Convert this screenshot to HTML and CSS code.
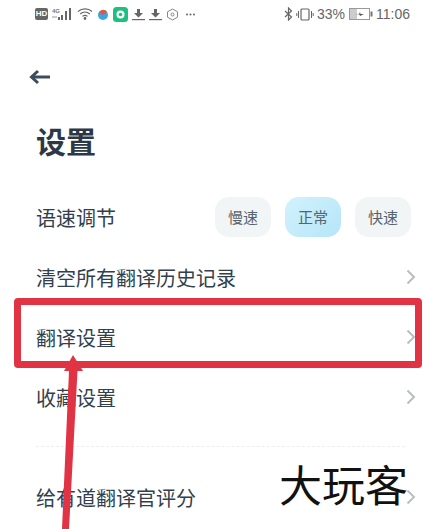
FILE: index.html
```html
<!DOCTYPE html>
<html lang="zh-CN">

<head>
    <meta charset="UTF-8">
    <meta name="viewport" content="width=device-width, initial-scale=1.0">
    <title>设置</title>
    <link rel="stylesheet" href="styles.css">
</head>

<body>

    <div class="page">
        <div class="status-bar">
            <div class="status-left">
                <span class="hd-badge">HD</span>
                <svg class="icon-signal" width="21" height="14" viewBox="0 0 21 14">
                    <text x="0" y="6" font-family="Liberation Sans" font-size="6" font-weight="bold" fill="#777">4G</text>
                    <rect x="0" y="9" width="5" height="2" fill="#ccc" />
                    <rect x="6" y="10" width="2" height="3" fill="#666" />
                    <rect x="9" y="8" width="2" height="5" fill="#666" />
                    <rect x="13" y="4" width="2" height="9" fill="#666" />
                    <rect x="17" y="1" width="2" height="12" fill="#666" />
                </svg>
                <svg width="16" height="14" viewBox="0 0 16 14" fill="none" stroke="#666" stroke-width="1.2">
                    <path d="M1 4.5 C5 1 11 1 15 4.5" />
                    <path d="M3.2 7 C6 4.6 10 4.6 12.8 7" />
                    <path d="M5.5 9.4 C7 8.2 9 8.2 10.5 9.4" />
                    <circle cx="8" cy="11.5" r="0.8" fill="#666" />
                </svg>
                <svg width="12" height="13" viewBox="0 0 12 13">
                    <circle cx="6" cy="7" r="5" fill="#3aa6dd" />
                    <path d="M2 5 C4 1 8 1 10 4 L6 7 Z" fill="#e2574c" />
                </svg>
                <svg width="15" height="15" viewBox="0 0 15 15">
                    <rect width="15" height="15" rx="3.5" fill="#1fbf82" />
                    <circle cx="7.5" cy="7.5" r="4" fill="#fff" />
                    <circle cx="7.5" cy="7.5" r="1.8" fill="#1fbf82" />
                </svg>
                <svg width="13" height="13" viewBox="0 0 13 13" fill="#666">
                    <path d="M5 1 H8 V5 H11 L6.5 9.5 L2 5 H5 Z" />
                    <rect y="11" width="13" height="1.2" />
                </svg>
                <svg width="13" height="13" viewBox="0 0 13 13" fill="#666">
                    <path d="M5 1 H8 V5 H11 L6.5 9.5 L2 5 H5 Z" />
                    <rect y="11" width="13" height="1.2" />
                </svg>
                <svg width="13" height="13" viewBox="0 0 13 13" fill="none" stroke="#888">
                    <path d="M6.5 1 L11.5 3.8 V9.2 L6.5 12 L1.5 9.2 V3.8 Z" />
                    <circle cx="6.5" cy="6.5" r="1.5" />
                </svg>
                <svg class="more-dots" width="9" height="3" viewBox="0 0 9 3" fill="#666">
                    <circle cx="1" cy="1.5" r="1" />
                    <circle cx="4.5" cy="1.5" r="1" />
                    <circle cx="8" cy="1.5" r="1" />
                </svg>
            </div>
            <div class="status-right">
                <svg width="9" height="14" viewBox="0 0 9 14" fill="none" stroke="#666" stroke-width="1.2">
                    <path d="M1 4 L7.5 10 L4.5 13 V1 L7.5 4 L1 10" />
                </svg>
                <svg width="18" height="13" viewBox="0 0 18 13" fill="none" stroke="#666">
                    <rect x="5" y="1" width="8" height="11" rx="1" stroke-width="1.2" />
                    <path d="M2.5 3 V10 M15.5 3 V10 M0.8 5 V8 M17.2 5 V8" />
                </svg>
                <span class="status-text battery-pct">33%</span>
                <svg width="24" height="12" viewBox="0 0 24 12">
                    <rect x="0.5" y="0.5" width="20" height="11" fill="#fff" stroke="#999" />
                    <rect x="1" y="1" width="7" height="10" fill="#ccc" />
                    <rect x="21.5" y="3.5" width="2" height="5" fill="#777" />
                    <path d="M6 6 H10 L11 4 L11.5 6 H15 L11 8 L10.5 6.6 Z" fill="#555" />
                </svg>
                <span class="status-text">11:06</span>
            </div>
        </div>

        <div class="back-row">
            <svg width="22" height="16" viewBox="0 0 22 16" fill="none" stroke="#3d4c5c" stroke-width="3">
                <path d="M21 8 H3" />
                <path d="M9 2 L2.5 8 L9 14" />
            </svg>
        </div>

        <h1 class="page-title">设置</h1>

        <div class="settings-list">
            <div class="row">
                <span class="row-label">语速调节</span>
                <div class="speed-chips">
                    <span class="chip">慢速</span>
                    <span class="chip chip-active">正常</span>
                    <span class="chip">快速</span>
                </div>
            </div>
            <div class="row">
                <span class="row-label">清空所有翻译历史记录</span>
                <svg class="chevron" width="10" height="16" viewBox="0 0 10 16"><path d="M1.5 1.5 L8 8 L1.5 14.5" /></svg>
            </div>
            <div class="row">
                <span class="row-label">翻译设置</span>
                <svg class="chevron" width="10" height="16" viewBox="0 0 10 16"><path d="M1.5 1.5 L8 8 L1.5 14.5" /></svg>
            </div>
            <div class="row">
                <span class="row-label">收藏设置</span>
                <svg class="chevron" width="10" height="16" viewBox="0 0 10 16"><path d="M1.5 1.5 L8 8 L1.5 14.5" /></svg>
            </div>
            <div class="divider"></div>
            <div class="row">
                <span class="row-label">给有道翻译官评分</span>
                <svg class="chevron" width="10" height="16" viewBox="0 0 10 16"><path d="M1.5 1.5 L8 8 L1.5 14.5" /></svg>
            </div>
        </div>

        <!-- annotation on top of the screenshot -->
        <div class="mark-box"></div>
        <svg class="mark-arrow" width="30" height="176" viewBox="0 0 30 176">
            <path d="M14 0 L24 16 H18.5 L10 174 H3 L10 16 H5 Z" fill="#e03445" />
        </svg>
        <div class="watermark">大玩客</div>
    </div>

</body>

</html>
```

FILE: styles.css
```css
body {
    margin: 0;
    background: #fff;
    font-family: "Noto Sans CJK SC", "Noto Sans", sans-serif;
}

.page {
    position: relative;
    width: 427px;
    height: 529px;
    overflow: hidden;
    background: #fff;
}

.status-bar {
    display: flex;
    justify-content: space-between;
    align-items: center;
    height: 28px;
    padding: 0 17px 0 35px;
}

.status-left,
.status-right {
    display: flex;
    align-items: center;
}

.status-left {
    gap: 4px;
}

.status-right {
    gap: 3px;
}

.hd-badge {
    width: 13px;
    height: 12px;
    border-radius: 2px;
    background: #666;
    color: #fff;
    font-family: "Liberation Sans", sans-serif;
    font-size: 8px;
    font-weight: bold;
    line-height: 12px;
    text-align: center;
}

.more-dots {
    margin-left: 3px;
}

.status-text {
    color: #666;
    font-family: "Liberation Sans", sans-serif;
    font-size: 14px;
}

.battery-pct {
    margin-right: 1px;
}

.back-row {
    display: flex;
    align-items: center;
    height: 24px;
    margin-top: 37px;
    padding-left: 29px;
}

.page-title {
    margin: 29px 0 0 36px;
    color: #2c3845;
    font-size: 30px;
    font-weight: bold;
    line-height: 44px;
}

.settings-list {
    margin-top: 25px;
    padding: 0 11px 0 36px;
}

.row {
    display: flex;
    justify-content: space-between;
    align-items: center;
    height: 60px;
}

.row-label {
    color: #333f4c;
    font-size: 20px;
}

.speed-chips {
    display: flex;
    gap: 14px;
    margin-right: 5px;
}

.chip {
    width: 56px;
    height: 40px;
    border-radius: 14px;
    background: #f2f5f6;
    color: #56626d;
    font-size: 15px;
    line-height: 40px;
    text-align: center;
}

.chip-active {
    background: linear-gradient(135deg, #d2f2fc, #b4e6f9);
}

.chevron {
    fill: none;
    stroke: #b9bec4;
    stroke-width: 2;
}

.divider {
    height: 0;
    margin: 19px 11px 20px 0;
    border-top: 1px dashed #eeeeee;
}

.mark-box {
    position: absolute;
    top: 298px;
    left: 14px;
    width: 394px;
    height: 56px;
    border: 7px solid #e03445;
    border-radius: 4px;
}

.mark-arrow {
    position: absolute;
    top: 355px;
    left: 59px;
}

.watermark {
    position: absolute;
    top: 453px;
    left: 279px;
    color: #111;
    font-size: 43px;
    font-weight: 400;
    line-height: 60px;
    white-space: nowrap;
}
```
